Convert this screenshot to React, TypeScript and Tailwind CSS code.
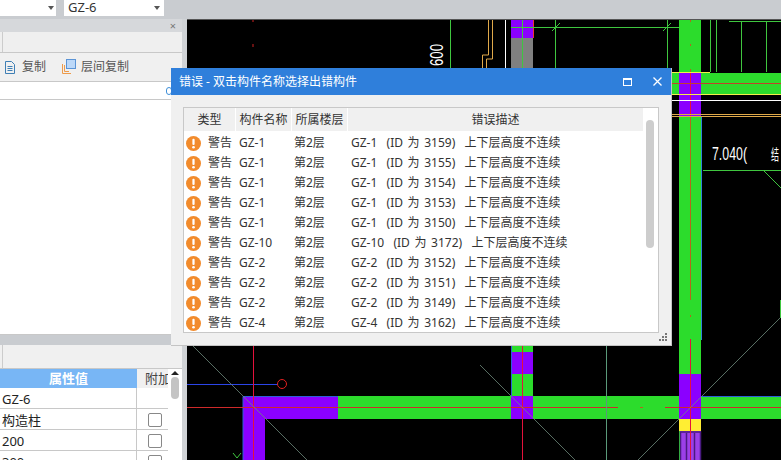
import React from 'react';

const font = { fontFamily: '"Noto Sans", "Noto Sans CJK SC", sans-serif' };

const errors = [
    { name: 'GZ-1', id: 3159 },
    { name: 'GZ-1', id: 3155 },
    { name: 'GZ-1', id: 3154 },
    { name: 'GZ-1', id: 3153 },
    { name: 'GZ-1', id: 3150 },
    { name: 'GZ-10', id: 3172 },
    { name: 'GZ-2', id: 3152 },
    { name: 'GZ-2', id: 3151 },
    { name: 'GZ-2', id: 3149 },
    { name: 'GZ-4', id: 3162 },
];

function Caret() {
    return <span className="w-0 h-0 border-x-[3px] border-x-transparent border-t-[4px] border-t-[#555]" />;
}

function WarnIcon() {
    return (
        <svg width="15" height="15" viewBox="0 0 16 16" className="shrink-0">
            <circle cx="8" cy="8" r="8" fill="#f28b2c" />
            <rect x="6.8" y="3" width="2.4" height="6.6" rx="1" fill="#fff" />
            <circle cx="8" cy="12" r="1.4" fill="#fff" />
        </svg>
    );
}

function CadCanvas() {
    return (
        <svg viewBox="187 19 594 441" className="w-full h-full block bg-black">
            {/* top area */}
            <line x1="187" y1="19.5" x2="781" y2="19.5" stroke="#555" />
            <line x1="253" y1="20" x2="253" y2="22" stroke="#c22" />
            <line x1="253" y1="44" x2="253" y2="47" stroke="#c22" />
            <line x1="450.5" y1="20" x2="450.5" y2="68" stroke="#3fc63f" />
            <text x="0" y="0" transform="translate(443 66) rotate(-90)" fill="#fff" fontSize="19" fontFamily="Liberation Sans" textLength="22" lengthAdjust="spacingAndGlyphs">600</text>
            <path d="M488.5 20V55H482.5V68M492.5 20V59H486.5V68" fill="none" stroke="#e0a94a" />
            <line x1="505.5" y1="20" x2="505.5" y2="68" stroke="#fff" />
            <rect x="511" y="20" width="22" height="18" fill="#8b00ff" />
            <rect x="511" y="38" width="22" height="30" fill="#808080" />
            <line x1="533.5" y1="20" x2="533.5" y2="38" stroke="#e33" />
            <line x1="511" y1="27.5" x2="679" y2="27.5" stroke="#3fc63f" />
            <line x1="522.5" y1="20" x2="522.5" y2="68" stroke="#3fc63f" />
            <line x1="555.5" y1="20" x2="555.5" y2="68" stroke="#3fc63f" />
            <line x1="667.5" y1="20" x2="667.5" y2="68" stroke="#3fc63f" />
            <line x1="552" y1="31" x2="560" y2="23" stroke="#3fc63f" />
            <line x1="663" y1="31" x2="671" y2="23" stroke="#3fc63f" />

            {/* right column */}
            <rect x="679" y="20" width="22" height="440" fill="#2cdc2c" />
            <rect x="672" y="73" width="109" height="21" fill="#2cdc2c" />
            <rect x="679" y="73" width="22" height="43" fill="#8b00ff" />
            <rect x="679" y="419" width="22" height="12" fill="#ffee33" />
            <rect x="680" y="431" width="21" height="29" fill="#9b3fe8" />
            <path d="M680.5 460V432H700.5V460M686.5 460V433M694.5 460V433" fill="none" stroke="#4a1a80" strokeWidth="1.5" />
            <path d="M690.5 20V22M690.5 44V46M690.5 69V73" stroke="#b5651d" />
            <line x1="690.5" y1="116" x2="690.5" y2="300" stroke="#b5651d" />
            <line x1="690.5" y1="315" x2="690.5" y2="317" stroke="#b5651d" />
            <line x1="690.5" y1="73" x2="690.5" y2="116" stroke="#e3123c" />
            <line x1="701.5" y1="116" x2="701.5" y2="340" stroke="#2e86d8" />
            <line x1="672" y1="83.5" x2="781" y2="83.5" stroke="#c0432a" />
            <line x1="672" y1="94.5" x2="781" y2="94.5" stroke="#f5ee4a" />
            <line x1="672" y1="100.5" x2="781" y2="100.5" stroke="#fff" />
            <line x1="672" y1="114.5" x2="781" y2="114.5" stroke="#e0a94a" />
            <line x1="672" y1="116.5" x2="781" y2="116.5" stroke="#e0a94a" />
            <line x1="672" y1="72.5" x2="710" y2="72.5" stroke="#f5ee4a" />
            <path d="M710.5 20V72M716.5 20V72M741.5 21V72M766.5 21V72M729 21.5H781" fill="none" stroke="#3fc63f" />
            <text x="712" y="160" fill="#fff" fontSize="19" fontFamily="Liberation Sans" textLength="35" lengthAdjust="spacingAndGlyphs">7.040(</text>
            <text x="771" y="160" fill="#fff" fontSize="15" style={font} textLength="8" lengthAdjust="spacingAndGlyphs">结</text>
            <path d="M703 170.5H781M763 170L781 188" fill="none" stroke="#3fc63f" />
            <path d="M780.5 300V318" stroke="#3fc63f" />

            {/* lower beams */}
            <rect x="512" y="346" width="21" height="50" fill="#2cdc2c" />
            <rect x="512" y="352" width="21" height="22" fill="#8b00ff" />
            <rect x="338" y="396" width="443" height="23" fill="#2cdc2c" />
            <rect x="511" y="396" width="22" height="23" fill="#8b00ff" />
            <rect x="679" y="374" width="22" height="45" fill="#8b00ff" />
            <path d="M243 460V396H338V419H265V460Z" fill="#8b00ff" />
            <path d="M243 460V396.5H338M701 396.5H781M511.5 346V396" fill="none" stroke="#2e5fd8" />
            <line x1="187" y1="384.5" x2="278" y2="384.5" stroke="#2b45e8" />
            <circle cx="282" cy="384" r="4.5" fill="none" stroke="#e32020" />
            <line x1="253.5" y1="346" x2="253.5" y2="460" stroke="#e3123c" />
            <line x1="522.5" y1="346" x2="522.5" y2="460" stroke="#e3123c" />
            <line x1="690.5" y1="339" x2="690.5" y2="460" stroke="#e3123c" />
            <line x1="187" y1="407.5" x2="618" y2="407.5" stroke="#cf2a2a" />
            <line x1="640" y1="407.5" x2="643" y2="407.5" stroke="#b5651d" />
            <line x1="665" y1="407.5" x2="781" y2="407.5" stroke="#cf2a2a" />
            <line x1="606.5" y1="346" x2="606.5" y2="460" stroke="#5a9a7a" />
            <path d="M192 345L307 460M480 365L575 460M638 460L780 318" fill="none" stroke="#6f8a7c" strokeWidth="0.8" />
            <path d="M233 453L237 458L241 453" fill="none" stroke="#3fc63f" />
        </svg>
    );
}

function ErrorDialog() {
    return (
        <div className="absolute left-[171px] top-[68px] w-[501px] h-[278px] flex flex-col bg-[#f0f0f0] border-r border-b border-[#c4c4c4]" style={font}>
            <div className="h-[27px] shrink-0 bg-[#2f7fdb] flex items-center pl-[8px] text-white text-[12px]">
                <span className="flex-1">错误 - 双击构件名称选择出错构件</span>
                <svg width="9" height="8" viewBox="0 0 9 8" className="mr-[21px]">
                    <rect x="0.5" y="0.5" width="8" height="7" fill="none" stroke="#fff" />
                    <rect x="0" y="0" width="9" height="2" fill="#fff" />
                </svg>
                <svg width="9" height="9" viewBox="0 0 9 9" className="mr-[9px]">
                    <path d="M0.5 0.5L8.5 8.5M8.5 0.5L0.5 8.5" stroke="#fff" strokeWidth="1.3" />
                </svg>
            </div>
            <div className="mt-[12px] ml-[12px] w-[476px] h-[226px] bg-white border border-[#c8c8c8] relative overflow-hidden text-[12px] text-[#333]">
                <div className="h-[23px] w-[459px] mb-[2px] bg-[#f0f0f0] grid grid-cols-[52px_56px_56px_1fr] items-center text-center">
                    <span className="border-r border-white h-full leading-[23px]">类型</span>
                    <span className="border-r border-white h-full leading-[23px]">构件名称</span>
                    <span className="border-r border-white h-full leading-[23px]">所属楼层</span>
                    <span>错误描述</span>
                </div>
                <div className="flex flex-col">
                    {errors.map((e) => (
                        <div key={e.id} className="h-[20px] grid grid-cols-[22px_31px_55px_57px_1fr] items-center pl-[2px]">
                            <WarnIcon />
                            <span>警告</span>
                            <span>{e.name}</span>
                            <span>第2层</span>
                            <span className="whitespace-pre [word-spacing:1.5px]">{`${e.name}  (ID 为 ${e.id})  上下层高度不连续`}</span>
                        </div>
                    ))}
                </div>
                <div className="absolute left-[462px] top-[12px] w-[8px] h-[128px] rounded bg-[#cdcdcd]" />
            </div>
            <svg width="9" height="9" viewBox="0 0 9 9" className="absolute right-[3px] bottom-[3px]" fill="#777">
                <rect x="6" y="0" width="2" height="2" />
                <rect x="3" y="3" width="2" height="2" />
                <rect x="6" y="3" width="2" height="2" />
                <rect x="0" y="6" width="2" height="2" />
                <rect x="3" y="6" width="2" height="2" />
                <rect x="6" y="6" width="2" height="2" />
            </svg>
        </div>
    );
}

function LeftPanel() {
    return (
        <aside className="relative w-[182px] shrink-0 flex flex-col bg-white text-[12px] text-[#333]">
            <div className="h-[13px] bg-[#d6d8db] flex items-center justify-end pr-[6px] text-[#777] text-[11px] leading-none">×</div>
            <div className="h-[21px] bg-[#efefef] border-b border-[#c8c8c8] flex">
                <div className="w-[3px] border-r border-[#ccc]" />
            </div>
            <div className="h-[29px] bg-[#f0f0f0] border-b border-[#c8c8c8] flex items-center pl-[4px] text-[#555]">
                <svg width="12" height="13" viewBox="0 0 12 13" className="mr-[6px]" fill="none" stroke="#3f7fb5">
                    <path d="M1.5 0.5H7.5L10.5 3.5V12.5H1.5Z" />
                    <path d="M3.5 5.5H8.5M3.5 7.5H8.5M3.5 9.5H8.5" />
                </svg>
                <span>复制</span>
                <svg width="16" height="16" viewBox="0 0 16 16" className="ml-[15px] mr-[4px]" fill="none">
                    <path d="M1.5 5V14.5H10" stroke="#ee9b4a" />
                    <path d="M3.5 6V12.5H8" stroke="#ee9b4a" />
                    <rect x="5.5" y="0.5" width="9" height="9" fill="#bcd8f8" stroke="#5b94d6" />
                </svg>
                <span>层间复制</span>
            </div>
            <div className="h-[18px] border-b border-[#c8c8c8]" />
            <div className="h-[231px]" />
            <div className="h-[4px] bg-white border-b border-[#c8c8c8]" />
            <div className="h-[10px] bg-[#c9ccd0]" />
            <div className="h-[24px] bg-[#f0f0f0] border-b border-[#c8c8c8] flex">
                <div className="w-[3px] border-r border-[#ccc]" />
            </div>
            <div className="flex-1 flex overflow-hidden">
                <div className="w-[168px] flex flex-col text-[13px] overflow-hidden" style={font}>
                    <div className="h-[19px] shrink-0 grid grid-cols-[137px_31px] items-center">
                        <span className="h-full bg-[#78b6f5] text-white font-bold text-center leading-[19px]">属性值</span>
                        <span className="h-full bg-[#f0f0f0] pl-[8px] whitespace-nowrap overflow-hidden leading-[19px] text-[#444]">附加</span>
                    </div>
                    {[
                        { value: 'GZ-6', check: false },
                        { value: '构造柱', check: true },
                        { value: '200', check: true },
                        { value: '300', check: true },
                    ].map((row) => (
                        <div key={row.value} className="h-[21px] shrink-0 grid grid-cols-[137px_31px] border-b border-[#c8c8c8]">
                            <span className="pl-[2px] border-r border-[#c8c8c8] leading-[22px] text-[#222]">{row.value}</span>
                            <span className="flex items-center pl-[11px]">
                                {row.check && <span className="w-[14px] h-[14px] rounded-[2px] border border-[#888] bg-white" />}
                            </span>
                        </div>
                    ))}
                </div>
                <div className="w-[14px] flex flex-col items-center bg-white pt-[2px]">
                    <span className="w-0 h-0 border-x-[4px] border-x-transparent border-b-[4px] border-b-[#222]" />
                    <span className="mt-[2px] w-[8px] h-[22px] rounded bg-[#c4c4c4]" />
                </div>
            </div>
            {/* collapse handle peeking out from under the dialog */}
            <span className="absolute left-[166px] top-[68px] w-[6px] h-[8px] rounded-full border border-[#3f8fd8] bg-white" />
        </aside>
    );
}

export default function App() {
    return (
        <div className="relative w-[781px] h-[460px] overflow-hidden flex flex-col bg-[#c9ccd0]" style={font}>
            {/* Toolbar */}
            <div className="h-[19px] shrink-0 flex items-start bg-[#c9ccd0] text-[13px] text-[#333]">
                <div className="w-[56px] h-[16px] bg-white flex items-center justify-end pr-[2px]"><Caret /></div>
                <div className="ml-[8px] w-[100px] h-[16px] bg-white flex items-center justify-between pl-[4px] pr-[4px]">
                    <span>GZ-6</span>
                    <Caret />
                </div>
            </div>

            <div className="flex-1 flex min-h-0">
                <LeftPanel />
                <div className="w-[5px] shrink-0 bg-[#d0d3d6]" />
                <div className="flex-1 min-w-0">
                    <CadCanvas />
                </div>
            </div>

            <ErrorDialog />
        </div>
    );
}
